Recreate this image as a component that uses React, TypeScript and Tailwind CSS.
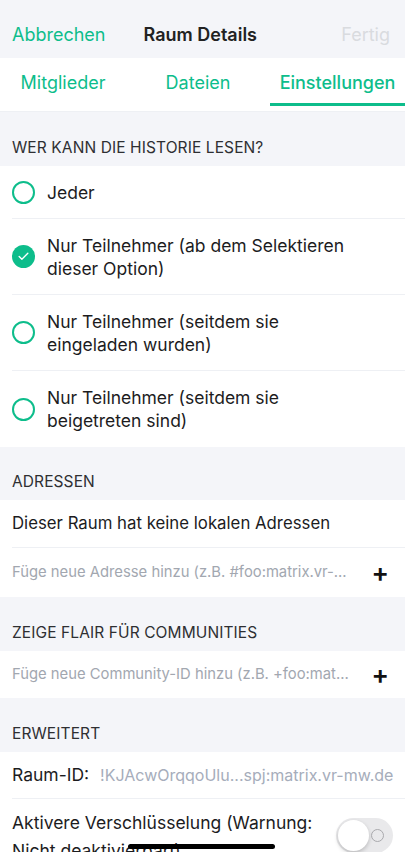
import { Check } from "lucide-react";

const font = { fontFamily: "Inter, 'Noto Sans', sans-serif" };

function Radio({ checked }: { checked?: boolean }) {
  if (checked) {
    return (
      <div className="w-[23px] h-[23px] rounded-full bg-[#0dbd8b] flex items-center justify-center shrink-0">
        <Check className="w-[13px] h-[13px] text-white" strokeWidth={2.5} />
      </div>
    );
  }
  return (
    <div className="w-[23px] h-[23px] rounded-full border-2 border-[#0dbd8b] shrink-0" />
  );
}

function SectionHeader({ title, h }: { title: string; h: string }) {
  return (
    <div className={`bg-[#f4f5f9] flex items-end px-3 pb-[7px] ${h}`}>
      <span className="text-[15.5px] text-[#2e2f32] tracking-[0.1px]">{title}</span>
    </div>
  );
}

export default function App() {
  const options = [
    { label: ["Jeder"], checked: false },
    { label: ["Nur Teilnehmer (ab dem Selektieren", "dieser Option)"], checked: true },
    { label: ["Nur Teilnehmer (seitdem sie", "eingeladen wurden)"], checked: false },
    { label: ["Nur Teilnehmer (seitdem sie", "beigetreten sind)"], checked: false },
  ];

  return (
    <div className="w-[405px] h-[852px] overflow-hidden relative bg-white text-[#1c1c1e]" style={font}>
      <div className="h-[58px] bg-[#f4f5f9] flex items-center px-3 pt-[10px] text-[18px]">
        <span className="text-[#0dbd8b]">Abbrechen</span>
        <span className="font-semibold text-[#222] ml-[38px]">Raum Details</span>
        <span className="text-[#d9dbdf] ml-auto mr-[3px]">Fertig</span>
      </div>

      <div className="h-[54px] flex border-b border-[#eef0f4] text-[18px] text-[#0dbd8b]">
        <div className="w-[126px] flex items-center justify-center pb-[4px]">Mitglieder</div>
        <div className="w-[144px] flex items-center justify-center pb-[4px]">Dateien</div>
        <div className="w-[135px] flex flex-col items-center justify-center relative font-medium">
          <span className="pb-[4px]">Einstellungen</span>
          <div className="absolute left-0 right-0 bottom-[5px] h-[3px] bg-[#0dbd8b]" />
        </div>
      </div>

      <SectionHeader title="WER KANN DIE HISTORIE LESEN?" h="h-[54px]" />

      <div className="flex flex-col">
        {options.map((o, i) => (
          <div key={i} className="pl-3">
            <div
              className={`flex items-center gap-3 pr-3 ${i === 0 ? "h-[53px]" : "h-[76px]"} ${i < 3 ? "border-b border-[#eef0f4]" : ""}`}
            >
              <Radio checked={o.checked} />
              <div className="text-[17.5px] leading-[23px] text-[#1c1c1e]">
                {o.label.map((l, j) => (
                  <div key={j}>{l}</div>
                ))}
              </div>
            </div>
          </div>
        ))}
      </div>

      <SectionHeader title="ADRESSEN" h="h-[53px]" />

      <div className="pl-3">
        <div className="h-[48px] flex items-center border-b border-[#eef0f4] text-[16.8px]">
          Dieser Raum hat keine lokalen Adressen
        </div>
        <div className="h-[49px] flex items-center justify-between pr-[16px] text-[14.8px] text-[#a2a7b0]">
          <span>Füge neue Adresse hinzu (z.B. #foo:matrix.vr-...</span>
          <span className="text-[#111] text-[26px] font-semibold leading-none">+</span>
        </div>
      </div>

      <SectionHeader title="ZEIGE FLAIR FÜR COMMUNITIES" h="h-[54px]" />

      <div className="pl-3">
        <div className="h-[47px] flex items-center justify-between pr-[16px] text-[14.8px] text-[#a2a7b0]">
          <span>Füge neue Community-ID hinzu (z.B. +foo:mat...</span>
          <span className="text-[#111] text-[26px] font-semibold leading-none">+</span>
        </div>
      </div>

      <SectionHeader title="ERWEITERT" h="h-[54px]" />

      <div className="pl-3">
        <div className="h-[47px] flex items-center border-b border-[#eef0f4]">
          <span className="text-[17.5px] text-[#1c1c1e]">Raum-ID:</span>
          <span className="ml-[11px] text-[16px] text-[#a6adbb]">!KJAcwOrqqoUlu...spj:matrix.vr-mw.de</span>
        </div>
        <div className="flex items-start justify-between pr-3 pt-[10px]">
          <div className="text-[17.5px] leading-[28px]">
            <div>Aktivere Verschlüsselung (Warnung:</div>
            <div>Nicht deaktivierbar!)</div>
          </div>
          <div className="mt-[9px] w-[57px] h-[35px] rounded-full bg-[#e9e9eb] relative shrink-0">
            <div className="absolute left-[2px] top-[2px] w-[31px] h-[31px] rounded-full bg-white shadow-[0_2px_4px_rgba(0,0,0,0.2)]" />
            <div className="absolute right-[9px] top-[11px] w-[13px] h-[13px] rounded-full border border-[#a9a9ad]" />
          </div>
        </div>
      </div>

      <div className="absolute bottom-[3px] left-[128px] w-[147px] h-[5px] rounded-full bg-black" />
    </div>
  );
}
